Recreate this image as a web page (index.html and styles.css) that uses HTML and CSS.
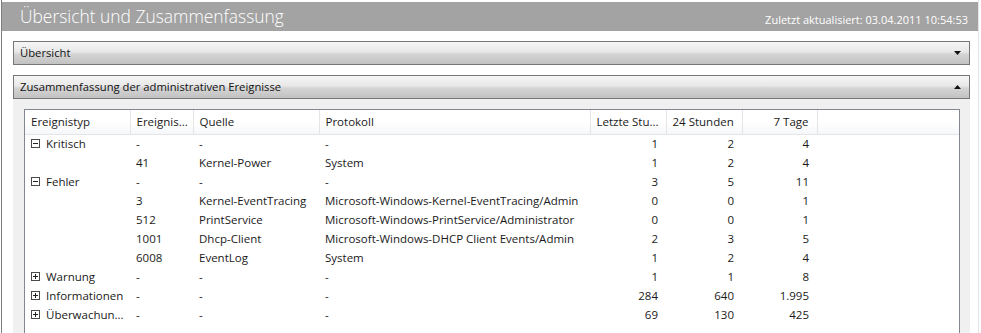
FILE: index.html
```html
<!DOCTYPE html>
<html lang="de">
<head>
<meta charset="utf-8">
<title>Übersicht und Zusammenfassung</title>
<link rel="stylesheet" href="styles.css">
</head>
<body>
<div class="page">
  <div class="banner">
    <h1 class="banner-title">Übersicht und Zusammenfassung</h1>
    <span class="banner-updated">Zuletzt aktualisiert: 03.04.2011 10:54:53</span>
  </div>
  <div class="content">
    <section class="panel">
      <div class="panel-head">
        <span>Übersicht</span>
        <svg class="chev" width="7" height="4" viewBox="0 0 7 4"><path d="M0 0H7L3.5 4Z" fill="#111"/></svg>
      </div>
    </section>
    <section class="panel">
      <div class="panel-head">
        <span>Zusammenfassung der administrativen Ereignisse</span>
        <svg class="chev" width="7" height="4" viewBox="0 0 7 4"><path d="M0 4H7L3.5 0Z" fill="#111"/></svg>
      </div>
      <div class="panel-body">
        <div class="grid-box">
          <table class="grid">
            <colgroup>
              <col class="c1"><col class="c2"><col class="c3"><col class="c4"><col class="c5"><col class="c6"><col class="c7"><col>
            </colgroup>
            <thead>
              <tr>
                <th>Ereignistyp</th><th>Ereignis...</th><th>Quelle</th><th>Protokoll</th>
                <th class="num">Letzte Stu...</th><th class="num">24 Stunden</th><th class="num">7 Tage</th><th class="filler"></th>
              </tr>
            </thead>
            <tbody>
              <tr><td><span class="tg"><svg width="9" height="9" viewBox="0 0 9 9"><rect x="0.5" y="0.5" width="8" height="8" fill="#fff" stroke="#4a4a4a"/><path d="M2 4.5H7" stroke="#222"/></svg>Kritisch</span></td><td>-</td><td>-</td><td>-</td><td class="num">1</td><td class="num">2</td><td class="num">4</td><td></td></tr>
              <tr><td></td><td>41</td><td>Kernel-Power</td><td>System</td><td class="num">1</td><td class="num">2</td><td class="num">4</td><td></td></tr>
              <tr><td><span class="tg"><svg width="9" height="9" viewBox="0 0 9 9"><rect x="0.5" y="0.5" width="8" height="8" fill="#fff" stroke="#4a4a4a"/><path d="M2 4.5H7" stroke="#222"/></svg>Fehler</span></td><td>-</td><td>-</td><td>-</td><td class="num">3</td><td class="num">5</td><td class="num">11</td><td></td></tr>
              <tr><td></td><td>3</td><td>Kernel-EventTracing</td><td>Microsoft-Windows-Kernel-EventTracing/Admin</td><td class="num">0</td><td class="num">0</td><td class="num">1</td><td></td></tr>
              <tr><td></td><td>512</td><td>PrintService</td><td>Microsoft-Windows-PrintService/Administrator</td><td class="num">0</td><td class="num">0</td><td class="num">1</td><td></td></tr>
              <tr><td></td><td>1001</td><td>Dhcp-Client</td><td>Microsoft-Windows-DHCP Client Events/Admin</td><td class="num">2</td><td class="num">3</td><td class="num">5</td><td></td></tr>
              <tr><td></td><td>6008</td><td>EventLog</td><td>System</td><td class="num">1</td><td class="num">2</td><td class="num">4</td><td></td></tr>
              <tr><td><span class="tg"><svg width="9" height="9" viewBox="0 0 9 9"><rect x="0.5" y="0.5" width="8" height="8" fill="#fff" stroke="#4a4a4a"/><path d="M2 4.5H7M4.5 2V7" stroke="#222"/></svg>Warnung</span></td><td>-</td><td>-</td><td>-</td><td class="num">1</td><td class="num">1</td><td class="num">8</td><td></td></tr>
              <tr><td><span class="tg"><svg width="9" height="9" viewBox="0 0 9 9"><rect x="0.5" y="0.5" width="8" height="8" fill="#fff" stroke="#4a4a4a"/><path d="M2 4.5H7M4.5 2V7" stroke="#222"/></svg>Informationen</span></td><td>-</td><td>-</td><td>-</td><td class="num">284</td><td class="num">640</td><td class="num">1.995</td><td></td></tr>
              <tr><td><span class="tg"><svg width="9" height="9" viewBox="0 0 9 9"><rect x="0.5" y="0.5" width="8" height="8" fill="#fff" stroke="#4a4a4a"/><path d="M2 4.5H7M4.5 2V7" stroke="#222"/></svg>Überwachun...</span></td><td>-</td><td>-</td><td>-</td><td class="num">69</td><td class="num">130</td><td class="num">425</td><td></td></tr>
            </tbody>
          </table>
        </div>
      </div>
    </section>
  </div>
</div>
</body>
</html>
```
FILE: styles.css
```css
* { box-sizing: border-box; }
html, body { margin: 0; padding: 0; background: #fff; overflow: hidden; }
body { font-family: "Open Sans", "Noto Sans", sans-serif; font-size: 11.5px; color: #1a1a1a; }

.page {
  margin-left: 1px;
  width: 978px;
  height: 333px;
  border-left: 1px solid #7d7d7d;
  border-right: 1px solid #e4e4e4;
  padding-top: 2px;
  overflow: hidden;
}

.banner {
  height: 29px;
  background: #a3a3a3;
  display: flex;
  align-items: flex-end;
  justify-content: space-between;
  padding: 0 10px 3px 18px;
  color: #fff;
}
.banner-title {
  margin: 0;
  font-size: 17.4px;
  font-weight: 300;
  line-height: 24px;
}
.banner-updated {
  font-size: 11px;
  line-height: 14px;
  padding-bottom: 1px;
}

.content {
  padding: 10px 8px 0 11px;
}
.panel + .panel { margin-top: 10px; }

.panel-head {
  height: 24px;
  border: 1px solid #767676;
  background: linear-gradient(#f6f6f6, #e8e8e8 45%, #d4d4d4 55%, #c2c2c2);
  display: flex;
  align-items: center;
  justify-content: space-between;
  padding: 0 8px 1px 6px;
  color: #111;
  font-size: 11.25px;
}
.chev { display: block; }

.panel-body {
  background: #f0f0f0;
  padding: 10px 10px 0 11px;
  height: 240px;
}
.grid-box {
  background: #fff;
  border: 1px solid #828790;
  height: 240px;
}

.grid {
  width: 100%;
  table-layout: fixed;
  border-collapse: collapse;
}
.c1 { width: 105px; }
.c2 { width: 63px; }
.c3 { width: 126px; }
.c4 { width: 271px; }
.c5 { width: 76px; }
.c6 { width: 76px; }
.c7 { width: 75px; }

.grid th {
  height: 24px;
  font-weight: normal;
  text-align: left;
  padding: 0 6px 0 6px;
  background: linear-gradient(#fff, #fff 50%, #f6f7f9);
  border-right: 1px solid #e3e5e8;
  border-bottom: 1px solid #e3e5e8;
  white-space: nowrap;
  overflow: hidden;
  color: #1a1a1a;
}
.grid th.filler { border-right: none; }
.grid td {
  height: 19px;
  padding: 0 6px;
  white-space: nowrap;
  overflow: hidden;
}
.grid .num { text-align: right; padding-right: 8px; }

.tg { display: inline-flex; align-items: center; gap: 6px; }
.tg svg { display: block; }
```
